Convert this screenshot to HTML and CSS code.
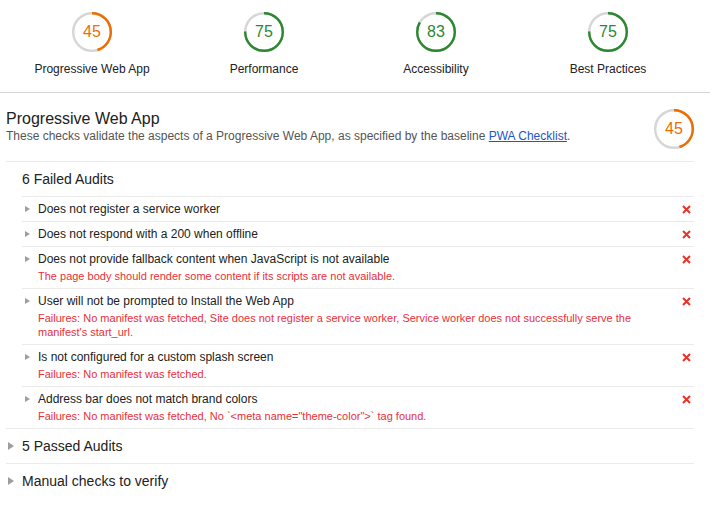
FILE: index.html
```html
<!DOCTYPE html>
<html lang="en">
<head>
<meta charset="utf-8">
<title>Lighthouse Report</title>
<link rel="stylesheet" href="styles.css">
</head>
<body>
<div class="page">
  <header class="summary">
    <div class="gauge-cell">
      <div class="gauge gauge--avg">
        <svg class="gauge-svg" viewBox="0 0 40 40"><circle class="track" cx="20" cy="20" r="18.8"/><circle class="arc" cx="20" cy="20" r="18.8" transform="rotate(-90 20 20)" style="stroke-dasharray: 53.15 200"/></svg>
        <span class="gauge-num">45</span>
      </div>
      <div class="gauge-label">Progressive Web App</div>
    </div>
    <div class="gauge-cell">
      <div class="gauge gauge--pass">
        <svg class="gauge-svg" viewBox="0 0 40 40"><circle class="track" cx="20" cy="20" r="18.8"/><circle class="arc" cx="20" cy="20" r="18.8" transform="rotate(-90 20 20)" style="stroke-dasharray: 88.59 200"/></svg>
        <span class="gauge-num">75</span>
      </div>
      <div class="gauge-label">Performance</div>
    </div>
    <div class="gauge-cell">
      <div class="gauge gauge--pass">
        <svg class="gauge-svg" viewBox="0 0 40 40"><circle class="track" cx="20" cy="20" r="18.8"/><circle class="arc" cx="20" cy="20" r="18.8" transform="rotate(-90 20 20)" style="stroke-dasharray: 98.04 200"/></svg>
        <span class="gauge-num">83</span>
      </div>
      <div class="gauge-label">Accessibility</div>
    </div>
    <div class="gauge-cell">
      <div class="gauge gauge--pass">
        <svg class="gauge-svg" viewBox="0 0 40 40"><circle class="track" cx="20" cy="20" r="18.8"/><circle class="arc" cx="20" cy="20" r="18.8" transform="rotate(-90 20 20)" style="stroke-dasharray: 88.59 200"/></svg>
        <span class="gauge-num">75</span>
      </div>
      <div class="gauge-label">Best Practices</div>
    </div>
  </header>

  <section class="category">
    <div class="cat-header">
      <div class="cat-text">
        <h1 class="cat-title">Progressive Web App</h1>
        <p class="cat-desc">These checks validate the aspects of a Progressive Web App, as specified by the baseline <a class="link" href="#">PWA Checklist</a>.</p>
      </div>
      <div class="gauge gauge--avg">
        <svg class="gauge-svg" viewBox="0 0 40 40"><circle class="track" cx="20" cy="20" r="18.8"/><circle class="arc" cx="20" cy="20" r="18.8" transform="rotate(-90 20 20)" style="stroke-dasharray: 53.15 200"/></svg>
        <span class="gauge-num">45</span>
      </div>
    </div>

    <div class="group">
      <div class="group-title group-title--open">6 Failed Audits</div>
      <div class="audits">
        <div class="audit">
          <span class="arrow arrow--small"></span>
          <div class="audit-body">
            <div class="audit-title">Does not register a service worker</div>
          </div>
          <svg class="fail-x" viewBox="0 0 9 9"><path d="M1 1L8 8M8 1L1 8"/></svg>
        </div>
        <div class="audit">
          <span class="arrow arrow--small"></span>
          <div class="audit-body">
            <div class="audit-title">Does not respond with a 200 when offline</div>
          </div>
          <svg class="fail-x" viewBox="0 0 9 9"><path d="M1 1L8 8M8 1L1 8"/></svg>
        </div>
        <div class="audit">
          <span class="arrow arrow--small"></span>
          <div class="audit-body">
            <div class="audit-title">Does not provide fallback content when JavaScript is not available</div>
            <div class="audit-desc">The page body should render some content if its scripts are not available.</div>
          </div>
          <svg class="fail-x" viewBox="0 0 9 9"><path d="M1 1L8 8M8 1L1 8"/></svg>
        </div>
        <div class="audit">
          <span class="arrow arrow--small"></span>
          <div class="audit-body">
            <div class="audit-title">User will not be prompted to Install the Web App</div>
            <div class="audit-desc">Failures: No manifest was fetched, Site does not register a service worker, Service worker does not successfully serve the manifest's start_url.</div>
          </div>
          <svg class="fail-x" viewBox="0 0 9 9"><path d="M1 1L8 8M8 1L1 8"/></svg>
        </div>
        <div class="audit">
          <span class="arrow arrow--small"></span>
          <div class="audit-body">
            <div class="audit-title">Is not configured for a custom splash screen</div>
            <div class="audit-desc">Failures: No manifest was fetched.</div>
          </div>
          <svg class="fail-x" viewBox="0 0 9 9"><path d="M1 1L8 8M8 1L1 8"/></svg>
        </div>
        <div class="audit">
          <span class="arrow arrow--small"></span>
          <div class="audit-body">
            <div class="audit-title">Address bar does not match brand colors</div>
            <div class="audit-desc">Failures: No manifest was fetched, No `&lt;meta name="theme-color"&gt;` tag found.</div>
          </div>
          <svg class="fail-x" viewBox="0 0 9 9"><path d="M1 1L8 8M8 1L1 8"/></svg>
        </div>
      </div>
    </div>

    <div class="group">
      <div class="group-title"><span class="arrow arrow--big"></span>5 Passed Audits</div>
    </div>
    <div class="group group--last">
      <div class="group-title"><span class="arrow arrow--big"></span>Manual checks to verify</div>
    </div>
  </section>
</div>
</body>
</html>
```

FILE: styles.css
```css
html, body {
  margin: 0;
  padding: 0;
  background: #ffffff;
}

body {
  font-family: "Liberation Sans", Arial, sans-serif;
  color: #212121;
}

.page {
  width: 710px;
}

/* ---------- Summary header ---------- */
.summary {
  display: flex;
  padding: 12px 0 16px 6px;
  border-bottom: 1px solid #d4d4d4;
}

.gauge-cell {
  width: 172px;
  display: flex;
  flex-direction: column;
  align-items: center;
}

.gauge {
  display: grid;
  width: 40px;
  height: 40px;
  flex: none;
}

.gauge-svg {
  grid-area: 1 / 1;
  width: 40px;
  height: 40px;
}

.gauge-svg .track {
  fill: none;
  stroke: #d6d6d6;
  stroke-width: 2.4;
}

.gauge-svg .arc {
  fill: none;
  stroke-width: 2.4;
}

.gauge--avg .arc { stroke: #ef6c00; }
.gauge--pass .arc { stroke: #2b882f; }

.gauge-num {
  grid-area: 1 / 1;
  align-self: center;
  justify-self: center;
  font-size: 16px;
  line-height: 18px;
}

.gauge--avg .gauge-num { color: #ef6c00; }
.gauge--pass .gauge-num { color: #2b882f; }

.gauge-label {
  margin-top: 10px;
  font-size: 12px;
  line-height: 14px;
  color: #212121;
}

/* ---------- Category ---------- */
.category {
  padding: 0 16px 0 6px;
}

.cat-header {
  display: flex;
  align-items: flex-start;
  padding-top: 16px;
  padding-bottom: 12px;
  border-bottom: 1px solid #ebebeb;
}

.cat-text {
  flex: 1;
}

.cat-title {
  margin: 0;
  font-size: 16px;
  line-height: 20px;
  font-weight: normal;
  color: #212121;
}

.cat-desc {
  margin: 0;
  font-size: 12px;
  line-height: 14px;
  color: #555555;
}

.link {
  color: #2256c8;
  text-decoration: underline;
}

/* ---------- Groups ---------- */
.group {
  border-bottom: 1px solid #ebebeb;
}

.group--last {
  border-bottom: none;
}

.group-title {
  display: flex;
  align-items: center;
  padding: 7px 0 7px 2px;
  font-size: 14px;
  line-height: 20px;
  color: #212121;
}

.group-title--open {
  padding-left: 16px;
}

.arrow {
  flex: none;
  width: 0;
  height: 0;
  border-style: solid;
  border-color: transparent transparent transparent #9e9e9e;
}

.arrow--big {
  border-width: 4px 0 4px 6px;
  margin-right: 8px;
}

.arrow--small {
  border-width: 3.5px 0 3.5px 5px;
  margin-top: 4px;
  margin-right: 8px;
}

/* ---------- Audits ---------- */
.audits {
  margin-left: 16px;
}

.audit {
  display: flex;
  align-items: flex-start;
  padding: 5px 0 5px 3px;
  border-top: 1px solid #ebebeb;
}

.audit-body {
  flex: 1;
  min-width: 0;
}

.audit-title {
  font-size: 12px;
  line-height: 14px;
  color: #212121;
}

.audit-desc {
  margin-top: 3px;
  font-size: 11px;
  line-height: 14px;
  color: #e8303a;
}

.fail-x {
  flex: none;
  width: 9px;
  height: 9px;
  margin: 3px 3px 0 10px;
}

.fail-x path {
  stroke: #ea3327;
  stroke-width: 2;
  fill: none;
}
```
